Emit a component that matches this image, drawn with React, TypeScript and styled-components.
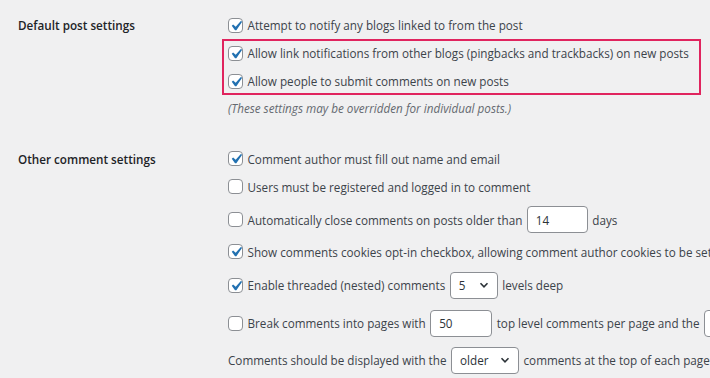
import React from "react";
import styled, { createGlobalStyle } from "styled-components";

const GlobalStyle = createGlobalStyle`
  body {
    margin: 0;
    background: #f0f0f1;
    overflow: hidden;
    font-family: "Open Sans", "Noto Sans", sans-serif;
    font-size: 11.7px;
    color: #3c434a;
  }
`;

const Page = styled.div`
  width: 710px;
  height: 378px;
  overflow: hidden;
  padding: 11px 0 0 18px;
  box-sizing: border-box;
`;

const Section = styled.div<{ $gap?: number }>`
  display: grid;
  grid-template-columns: 210px max-content;
  margin-bottom: ${({ $gap }) => $gap ?? 0}px;
`;

const Label = styled.div`
  height: 28px;
  display: flex;
  align-items: center;
  font-weight: 600;
  color: #1d2327;
`;

const Options = styled.div`
  display: flex;
  flex-direction: column;
`;

const Row = styled.label<{ $h?: number }>`
  display: flex;
  align-items: center;
  gap: 4.5px;
  height: ${({ $h }) => $h ?? 28}px;
  white-space: nowrap;
`;

const Highlight = styled.div`
  margin-left: -6px;
  padding-left: 6px;
  width: 479px;
  box-sizing: border-box;
  outline: 2px solid #e0245e;
  outline-offset: -2px;
  display: flex;
  flex-direction: column;
`;

const Note = styled.p`
  margin: 0;
  height: 25px;
  display: flex;
  align-items: center;
  font-style: italic;
  color: #646970;
`;

const Box = styled.span`
  position: relative;
  flex: none;
  width: 15px;
  height: 15px;
  box-sizing: border-box;
  border: 1px solid #8c8f94;
  border-radius: 4px;
  background: #fff;
`;

const Tick = styled.svg`
  position: absolute;
  left: -3px;
  top: -3px;
  width: 20px;
  height: 20px;
`;

const TextInput = styled.span<{ $w: number }>`
  flex: none;
  width: ${({ $w }) => $w}px;
  height: 27px;
  box-sizing: border-box;
  border: 1px solid #8c8f94;
  border-radius: 4px;
  background: #fff;
  display: flex;
  align-items: center;
  padding-left: 8px;
  color: #2c3338;
`;

const Select = styled(TextInput)`
  justify-content: space-between;
  padding-right: 8px;
`;

const Chevron = styled.svg`
  width: 10px;
  height: 10px;
`;

const Check: React.FC<{ on?: boolean }> = ({ on }) => (
  <Box>
    {on && (
      <Tick viewBox="0 0 20 20">
        <path
          d="M14.83 4.89l1.34.94-5.81 8.38H9.02L5.78 9.67l1.34-1.25 2.57 2.4z"
          fill="#2271b1"
        />
      </Tick>
    )}
  </Box>
);

const Dropdown: React.FC<{ w: number; value: string }> = ({ w, value }) => (
  <Select $w={w}>
    {value}
    <Chevron viewBox="0 0 10 10">
      <path d="M1.5 3.2 5 6.8l3.5-3.6" fill="none" stroke="#2c3338" strokeWidth="1.6" />
    </Chevron>
  </Select>
);

export default function App() {
  return (
    <>
      <GlobalStyle />
      <Page>
        <Section $gap={24.5}>
          <Label>Default post settings</Label>
          <Options>
            <Row>
              <Check on />
              Attempt to notify any blogs linked to from the post
            </Row>
            <Highlight>
              <Row>
                <Check on />
                Allow link notifications from other blogs (pingbacks and trackbacks) on new posts
              </Row>
              <Row>
                <Check on />
                Allow people to submit comments on new posts
              </Row>
            </Highlight>
            <Note>(These settings may be overridden for individual posts.)</Note>
          </Options>
        </Section>

        <Section>
          <Label>Other comment settings</Label>
          <Options>
            <Row>
              <Check on />
              Comment author must fill out name and email
            </Row>
            <Row>
              <Check />
              Users must be registered and logged in to comment
            </Row>
            <Row $h={38}>
              <Check />
              Automatically close comments on posts older than
              <TextInput $w={61}>14</TextInput>
              days
            </Row>
            <Row $h={26}>
              <Check on />
              Show comments cookies opt-in checkbox, allowing comment author cookies to be set
            </Row>
            <Row $h={41}>
              <Check on />
              Enable threaded (nested) comments
              <Dropdown w={48} value="5" />
              levels deep
            </Row>
            <Row $h={35}>
              <Check />
              Break comments into pages with
              <TextInput $w={62}>50</TextInput>
              top level comments per page and the
              <TextInput $w={62}>1</TextInput>
              page displayed by default
            </Row>
            <Row $h={39}>
              Comments should be displayed with the
              <Dropdown w={68} value="older" />
              comments at the top of each page
            </Row>
          </Options>
        </Section>
      </Page>
    </>
  );
}
